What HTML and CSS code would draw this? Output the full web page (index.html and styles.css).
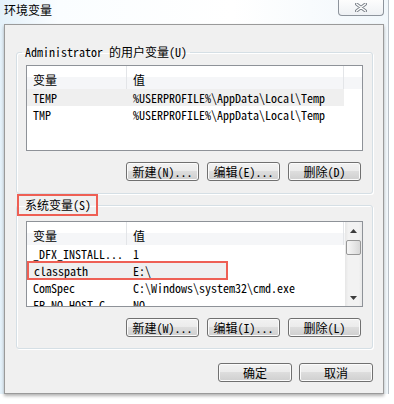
FILE: index.html
```html
<!DOCTYPE html>
<html lang="zh-CN">
<head>
  <meta charset="UTF-8" />
  <title>环境变量</title>
  <link rel="stylesheet" href="styles.css">
</head>
<body>
  <div class="frame">
    <div class="titlebar">
      <span class="title">环境变量</span>
      <span class="close">
        <svg width="12" height="9" viewBox="0 0 12 9">
          <path d="M1.5 1 L10.5 8 M10.5 1 L1.5 8" stroke="#7a8088" stroke-width="3.2" stroke-linecap="round" fill="none"/>
          <path d="M1.5 1 L10.5 8 M10.5 1 L1.5 8" stroke="#ffffff" stroke-width="1.4" stroke-linecap="round" fill="none"/>
        </svg>
      </span>
    </div>

    <div class="client">
      <fieldset class="group g1">
        <legend>Administrator 的用户变量(U)</legend>
        <div class="list">
          <div class="table">
            <div class="head">
              <div class="h1">变量</div>
              <div class="h2">值</div>
              <div class="hfill"></div>
            </div>
            <div class="rows">
              <div class="row sel"><div class="c1">TEMP</div><div class="c2">%USERPROFILE%\AppData\Local\Temp</div></div>
              <div class="row"><div class="c1">TMP</div><div class="c2">%USERPROFILE%\AppData\Local\Temp</div></div>
            </div>
          </div>
        </div>
        <div class="btns">
          <div class="btn">新建(N)...</div>
          <div class="btn">编辑(E)...</div>
          <div class="btn">删除(D)</div>
        </div>
      </fieldset>

      <fieldset class="group g2">
        <legend>系统变量(S)</legend>
        <div class="list">
          <div class="table">
            <div class="head">
              <div class="h1">变量</div>
              <div class="h2">值</div>
            </div>
            <div class="rows">
              <div class="row"><div class="c1">_DFX_INSTALL...</div><div class="c2">1</div></div>
              <div class="row sel mark"><div class="c1">classpath</div><div class="c2">E:\</div></div>
              <div class="row"><div class="c1">ComSpec</div><div class="c2">C:\Windows\system32\cmd.exe</div></div>
              <div class="row"><div class="c1">FP_NO_HOST_C...</div><div class="c2">NO</div></div>
            </div>
          </div>
          <div class="scroll">
            <div class="arrow">
              <svg width="7" height="4" viewBox="0 0 7 4"><path d="M0 4 L3.5 0 L7 4 Z" fill="#3c3c3c"/></svg>
            </div>
            <div class="thumb"></div>
            <div class="track"></div>
            <div class="arrow">
              <svg width="7" height="4" viewBox="0 0 7 4"><path d="M0 0 L3.5 4 L7 0 Z" fill="#3c3c3c"/></svg>
            </div>
          </div>
        </div>
        <div class="btns">
          <div class="btn">新建(W)...</div>
          <div class="btn">编辑(I)...</div>
          <div class="btn">删除(L)</div>
        </div>
      </fieldset>

      <div class="footer">
        <div class="btn">确定</div>
        <div class="btn">取消</div>
      </div>
    </div>
  </div>
</body>
</html>
```

FILE: styles.css
```css
* {
  box-sizing: border-box;
}

body {
  margin: 0;
  width: 394px;
  height: 404px;
  overflow: hidden;
  background: #ffffff;
  color: #000;
  font-family: "Noto Sans Mono CJK SC", "Liberation Mono", "Noto Sans CJK SC", monospace;
  font-size: 12px;
}

.frame {
  width: 389px;
  height: 394px;
  border-right: 1px solid #b9c0c7;
  background: linear-gradient(to right, #e4f1fa, #fafdff 15%, #ffffff 60%, #f1f7fb);
}

.titlebar {
  display: flex;
  height: 24px;
}

.title {
  padding: 2px 0 0 4px;
  font-family: "Noto Sans CJK SC", sans-serif;
  font-size: 12px;
  line-height: 16px;
}

.close {
  margin-left: auto;
  margin-right: 4px;
  width: 46px;
  height: 16px;
  border: 1px solid #8d949c;
  border-top: none;
  border-radius: 0 0 4px 4px;
  background: linear-gradient(#fdfdfd, #eef1f4);
  display: flex;
  justify-content: center;
  align-items: center;
}

.client {
  margin-left: 4px;
  width: 380px;
  border: 1px solid #9a9a9a;
  background: #f0f0f0;
  padding: 0 10px 11px 11px;
  box-shadow: 0 2px 3px rgba(0, 0, 0, 0.3);
}

.group {
  margin: 0;
  min-width: 0;
  padding: 6px 9px 12px;
  border: 1px solid #d5dfe5;
  border-radius: 3px;
  box-shadow: inset 1px 1px #fff, 1px 1px #fff;
}

.g1 {
  margin-top: 20px;
}

.g1 legend {
  margin-left: -4px;
  padding: 0 3px;
  line-height: 14px;
}

.g2 {
  padding-top: 5px;
  padding-bottom: 11px;
}

.g2 legend {
  margin-left: -9px;
  padding: 0 5px 0 6px;
  line-height: 18px;
  border: 2px solid #ee5f54;
}

.list {
  display: flex;
  height: 86px;
  border: 1px solid #8e9298;
  background: #fff;
  overflow: hidden;
}

.table {
  flex: 1;
  min-width: 0;
}

.head {
  display: flex;
  height: 23px;
  background: linear-gradient(#ffffff 48%, #f5f6f8 48%);
  font-family: "Noto Sans CJK SC", sans-serif;
  line-height: 16px;
}

.h1 {
  width: 100px;
  padding: 6px 0 0 6px;
  border-right: 1px solid #e3e5e8;
}

.h2 {
  width: 217px;
  padding: 6px 0 0 6px;
  border-right: 1px solid #e3e5e8;
}

.hfill {
  flex: 1;
}

.row {
  display: flex;
  width: 317px;
  height: 17px;
  line-height: 17px;
  white-space: nowrap;
}

.sel {
  background: #efefef;
}

.mark {
  outline: 2px solid #ee5f54;
  outline-offset: -1px;
  width: 199px;
  margin-left: 1px;
  overflow: visible;
}

.mark .c1 {
  width: 99px;
}

.c1 {
  width: 100px;
  padding-left: 6px;
  overflow: hidden;
}

.c2 {
  flex: 1;
  padding-left: 6px;
  overflow: hidden;
}

.scroll {
  width: 17px;
  display: flex;
  flex-direction: column;
  background: linear-gradient(to right, #e6e6e6, #f2f2f2 20%, #f2f2f2 80%, #e9e9e9);
}

.arrow {
  height: 17px;
  display: flex;
  justify-content: center;
  align-items: center;
}

.thumb {
  margin: 1px 1px 0;
  height: 15px;
  border: 1px solid #979797;
  border-radius: 2px;
  background: linear-gradient(to right, #f6f6f6, #e8e8e8 50%, #d8d8d8);
}

.track {
  flex: 1;
}

.btns {
  display: flex;
  justify-content: flex-end;
  gap: 8px;
  margin-top: 11px;
  padding-right: 2px;
}

.btn {
  width: 73px;
  height: 19px;
  border: 1px solid #707070;
  border-radius: 3px;
  background: linear-gradient(#f2f2f2, #ebebeb 50%, #dddddd 50%, #cfcfcf);
  box-shadow: inset 0 0 0 1px #fbfbfb;
  text-align: center;
  line-height: 17px;
  white-space: nowrap;
}

.footer {
  display: flex;
  justify-content: flex-end;
  gap: 7px;
  margin-top: 14px;
}

.footer .btn {
  width: 74px;
  font-family: "Noto Sans CJK SC", sans-serif;
}
```
